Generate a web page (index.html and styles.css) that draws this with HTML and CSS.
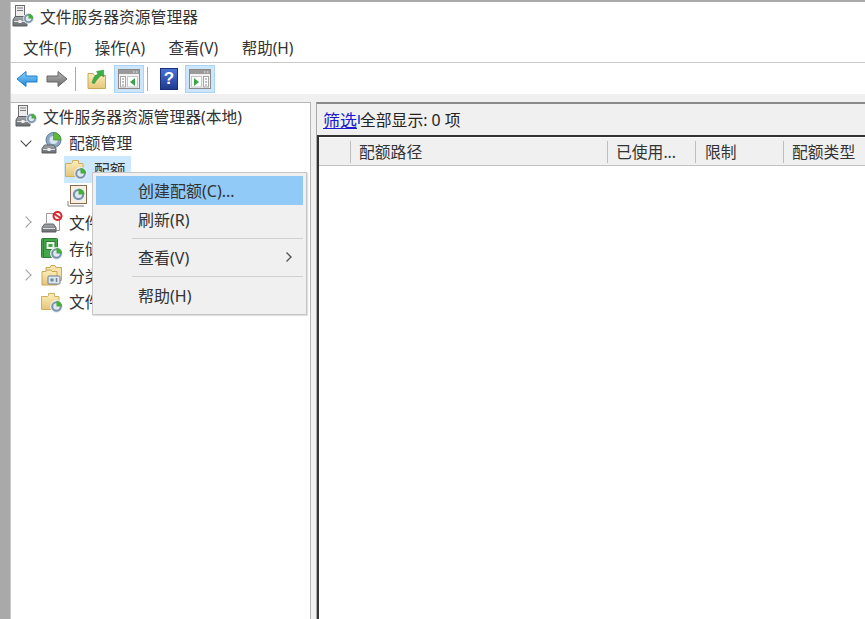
FILE: index.html
```html
<!DOCTYPE html>
<html lang="zh-CN">
<head>
<meta charset="utf-8">
<title>文件服务器资源管理器</title>
<link rel="stylesheet" href="styles.css">
</head>
<body>
<svg class="defs" width="0" height="0" aria-hidden="true">
  <defs>
    <linearGradient id="fold" x1="0" y1="0" x2="0" y2="1"><stop offset="0" stop-color="#fdeebb"/><stop offset="1" stop-color="#e5c678"/></linearGradient>
    <linearGradient id="blue" x1="0" y1="0" x2="0" y2="1"><stop offset="0" stop-color="#8fd2fb"/><stop offset="1" stop-color="#1f86d8"/></linearGradient>
    <linearGradient id="gray" x1="0" y1="0" x2="0" y2="1"><stop offset="0" stop-color="#b5b5b5"/><stop offset="1" stop-color="#6e6e6e"/></linearGradient>
    <linearGradient id="bag" x1="0" y1="0" x2="0" y2="1"><stop offset="0" stop-color="#a5a9ad"/><stop offset="1" stop-color="#666b70"/></linearGradient>
    <symbol id="pie" viewBox="0 0 12 12">
      <circle cx="6" cy="6" r="5.400" fill="#7b93ad" stroke="#eef3f7" stroke-width="1"/>
      <circle cx="6" cy="6" r="3" fill="#dfe8ef"/>
      <path d="M6 6V.8A5.200 5.200 0 0 1 11.200 6z" fill="#46ad3c"/>
    </symbol>
    <symbol id="server" viewBox="0 0 22 22">
      <rect x="3.500" y="0.500" width="9" height="11" fill="#eeeeee" stroke="#6d6d6d"/>
      <path d="M5 3h6M5 5.500h6" stroke="#777"/>
      <path d="M1 15l2-3.500h10l2 3.500v6h-14z" fill="url(#bag)" stroke="#5d6165"/>
      <path d="M2 16.500h12" stroke="#dcdcdc"/>
      <rect x="6.500" y="15" width="3" height="3" fill="#eee"/>
      <svg x="11" y="8" width="11" height="11"><use href="#pie"/></svg>
    </symbol>
    <symbol id="quota" viewBox="0 0 22 22">
      <circle cx="12.500" cy="8" r="7.500" fill="#8ca8c6" stroke="#5f7d99"/>
      <circle cx="12.500" cy="8" r="4" fill="#dbe5ee"/>
      <path d="M12.500 8V.5A7.500 7.500 0 0 1 20 8z" fill="#5dba3b" stroke="#3f8c2a" stroke-width=".6"/>
      <path d="M1 16.500l2.500-3.500h9l2.500 3.500v4.500h-14z" fill="url(#bag)" stroke="#5d6165"/>
      <path d="M2 17.500h12" stroke="#dcdcdc"/>
      <rect x="6.500" y="16" width="3" height="3" fill="#eee"/>
    </symbol>
    <symbol id="folderpie" viewBox="0 0 22 22">
      <path d="M.5 5.500h6l1-1V2.500h6v3h4.500v13h-17.500z" fill="url(#fold)" stroke="#cfae62"/>
      <svg x="9" y="9" width="13" height="13"><use href="#pie"/></svg>
    </symbol>
    <symbol id="template" viewBox="0 0 22 22">
      <rect x="4.500" y="0.500" width="16" height="18" fill="#f6efe2" stroke="#8c6a50"/>
      <path d="M2 21h16M2 16v5" stroke="#aaa" stroke-width="1.500"/>
      <svg x="5.500" y="2.500" width="14" height="14"><use href="#pie"/></svg>
    </symbol>
    <symbol id="blocked" viewBox="0 0 22 22">
      <path d="M5.500 12V2.500h8M18.500 9v10.500h-4" fill="#fff" stroke="#9a9a9a"/>
      <path d="M1 16.500l2.500-3.500h9l2.500 3.500v4.500h-14z" fill="url(#bag)" stroke="#5d6165"/>
      <path d="M2 17.500h12" stroke="#dcdcdc"/>
      <circle cx="16.500" cy="5" r="4" fill="#fff" stroke="#d8242c" stroke-width="2"/>
      <path d="M13.500 3l6 4" stroke="#d8242c" stroke-width="2"/>
    </symbol>
    <symbol id="storage" viewBox="0 0 22 22">
      <rect x=".5" y=".5" width="16" height="19" rx="1" fill="#45a64b" stroke="#2f7a34"/>
      <path d="M2.500 1v18" stroke="#2f7a34"/>
      <rect x="5" y="3.500" width="9" height="8" fill="#eaf6e7" stroke="#2f7a34"/>
      <rect x="7.500" y="6" width="4" height="3" fill="#45a64b"/>
      <svg x="9" y="9" width="13" height="13"><use href="#pie"/></svg>
    </symbol>
    <symbol id="classify" viewBox="0 0 22 22">
      <path d="M5 3.500h4l1-2h4l1 2h5.500v13h-15.500z" fill="#f6e2ac" stroke="#c9a658"/>
      <path d="M1 7.500h4l1-1.500h4l1 1.500h5v13.500h-15z" fill="url(#fold)" stroke="#c9a658"/>
      <rect x="7" y="12" width="12" height="8" rx="1" fill="#dfe7ef" stroke="#6d7f92"/>
      <circle cx="11" cy="16" r="1.800" fill="#6d8ba3"/>
      <path d="M15.500 14v4" stroke="#6d7f92" stroke-width="1.500"/>
    </symbol>
    <symbol id="back" viewBox="0 0 22 18">
      <path d="M1 9l9-7.500v4.500h11v6h-11v4.500z" fill="url(#blue)" stroke="#1c7fcf"/>
    </symbol>
    <symbol id="forward" viewBox="0 0 22 18">
      <path d="M21 9l-9-7.500v4.500h-11v6h11v4.500z" fill="url(#gray)" stroke="#666"/>
    </symbol>
    <symbol id="upfolder" viewBox="0 0 20 22">
      <path d="M1 5.500h5l1.500 2h11v13h-17.500z" fill="url(#fold)" stroke="#c9a658"/>
      <path d="M5 15c1-5 3-8 6-9l-1.500-2.500 7-1.500 .5 7-2.500-1.500c-2 1-5 4-7 8z" fill="#3fae49" stroke="#2f8a38" stroke-width=".5"/>
    </symbol>
    <symbol id="paneleft" viewBox="0 0 22 20">
      <rect x=".5" y=".5" width="21" height="19" fill="#f2f2f2" stroke="#8a8a8a"/>
      <rect x="1" y="1" width="20" height="4" fill="#9a9a9a"/>
      <path d="M15 3h1.500M18 3h1.500" stroke="#eee"/>
      <rect x="2.500" y="7.500" width="5" height="10.500" fill="#fff" stroke="#a5a5a5"/>
      <path d="M4 10h2M4 13h2M4 16h2" stroke="#888"/>
      <rect x="9.500" y="7.500" width="10" height="10.500" fill="#fff" stroke="#c5c5c5"/>
      <path d="M12 13l5-4v8z" fill="#37a447"/>
    </symbol>
    <symbol id="paneright" viewBox="0 0 22 20">
      <rect x=".5" y=".5" width="21" height="19" fill="#f2f2f2" stroke="#8a8a8a"/>
      <rect x="1" y="1" width="20" height="4" fill="#9a9a9a"/>
      <path d="M15 3h1.500M18 3h1.500" stroke="#eee"/>
      <rect x="2.500" y="7.500" width="10" height="10.500" fill="#fff" stroke="#c5c5c5"/>
      <path d="M10 13l-5-4v8z" fill="#37a447"/>
      <rect x="14.500" y="7.500" width="5" height="10.500" fill="#fff" stroke="#a5a5a5"/>
      <path d="M16 10h2M16 13h2M16 16h2" stroke="#888"/>
    </symbol>
  </defs>
</svg>

<div class="window">
  <header class="titlebar">
    <svg class="ico-title"><use href="#server"/></svg>
    <span>文件服务器资源管理器</span>
  </header>
  <nav class="menubar">
    <span class="menu-item">文件(F)</span>
    <span class="menu-item">操作(A)</span>
    <span class="menu-item">查看(V)</span>
    <span class="menu-item">帮助(H)</span>
  </nav>
  <div class="toolbar">
    <svg class="tb-arrow"><use href="#back"/></svg>
    <svg class="tb-arrow"><use href="#forward"/></svg>
    <i class="tb-sep first"></i>
    <svg class="tb-up"><use href="#upfolder"/></svg>
    <span class="tb-btn on"><svg class="tb-pane"><use href="#paneleft"/></svg></span>
    <i class="tb-sep"></i>
    <span class="tb-help">?</span>
    <span class="tb-btn on"><svg class="tb-pane"><use href="#paneright"/></svg></span>
  </div>
  <div class="gapbar"></div>
  <main class="panes">
    <aside class="tree">
      <div class="row lvl0"><svg class="ico"><use href="#server"/></svg><span>文件服务器资源管理器(本地)</span></div>
      <div class="row lvl1"><span class="tw open"></span><svg class="ico"><use href="#quota"/></svg><span>配额管理</span></div>
      <div class="row lvl2 selected"><svg class="ico"><use href="#folderpie"/></svg><span>配额</span></div>
      <div class="row lvl2"><svg class="ico"><use href="#template"/></svg></div>
      <div class="row lvl1"><span class="tw"></span><svg class="ico"><use href="#blocked"/></svg><span>文件</span></div>
      <div class="row lvl1"><span class="tw none"></span><svg class="ico"><use href="#storage"/></svg><span>存储</span></div>
      <div class="row lvl1"><span class="tw"></span><svg class="ico"><use href="#classify"/></svg><span>分类</span></div>
      <div class="row lvl1"><span class="tw none"></span><svg class="ico"><use href="#folderpie"/></svg><span>文件</span></div>
    </aside>
    <section class="detail">
      <div class="filter"><a class="filter-link">筛选</a><span class="filter-text">全部显示: 0 项</span></div>
      <div class="list">
        <div class="list-head">
          <span class="col col-icon"></span>
          <span class="col col-path">配额路径</span>
          <span class="col col-used">已使用...</span>
          <span class="col col-limit">限制</span>
          <span class="col col-type">配额类型</span>
        </div>
      </div>
    </section>
  </main>
</div>

<div class="ctx">
  <div class="ctx-item active">创建配额(C)...</div>
  <div class="ctx-item">刷新(R)</div>
  <div class="ctx-sep"></div>
  <div class="ctx-item">查看(V)<svg class="ctx-arrow" viewBox="0 0 8 12"><path d="M1.500 1.500L6 6l-4.500 4.500" fill="none" stroke="#555" stroke-width="1.400"/></svg></div>
  <div class="ctx-sep"></div>
  <div class="ctx-item">帮助(H)</div>
</div>
</body>
</html>
```
FILE: styles.css
```css
* { box-sizing: border-box; }
html, body { height: 100%; }
body {
  margin: 0;
  overflow: hidden;
  background: #a9a9a9;
  padding: 2px 0 0 10px;
  font-family: "Noto Sans", "Noto Sans CJK SC", sans-serif;
  font-size: 15.500px;
  color: #333;
}
.defs { position: absolute; }
.window {
  height: 617px;
  width: 855px;
  display: flex;
  flex-direction: column;
  background: #f0f0f0;
  border-left: 1px solid #c8c8c8;
}
.titlebar {
  height: 28px;
  background: #fff;
  display: flex;
  align-items: center;
  gap: 6px;
  padding-left: 1px;
  font-size: 15.800px;
}
.ico-title { width: 22px; height: 22px; }
.menubar {
  height: 33px;
  background: #fff;
  display: flex;
  align-items: center;
  gap: 23.500px;
  padding: 2px 0 0 12px;
  font-size: 15.500px;
  border-bottom: 1px solid #c8c8c8;
}
.toolbar {
  height: 31px;
  background: #fff;
  display: flex;
  align-items: center;
  padding-left: 5px;
}
.tb-arrow { width: 22px; height: 18px; margin-right: 8px; }
.tb-sep { width: 1px; height: 24px; background: #aaa; margin: 0 12px 0 3px; }
.tb-sep.first { margin: 0 11px 0 -1px; }
.tb-up { width: 20px; height: 22px; margin-right: 7px; }
.tb-btn {
  width: 30px;
  height: 28px;
  display: flex;
  align-items: center;
  justify-content: center;
}
.tb-btn.on { background: #cde6fb; border: 1px solid #a9d4f5; }
.tb-pane { width: 22px; height: 20px; }
.tb-help {
  width: 18px;
  height: 22px;
  margin-right: 7px;
  background: linear-gradient(#4a73d6, #1f3b8f);
  border: 1px solid #1a2f78;
  color: #fff;
  font: bold 17px/20px "Liberation Sans", sans-serif;
  text-align: center;
}
.gapbar { height: 8px; background: #f0f0f0; }
.panes { flex: 1; display: flex; min-height: 0; }
.tree {
  width: 300px;
  background: #fff;
  border-top: 1px solid #b5b5b5;
  border-right: 1px solid #b8b8b8;
  padding: 0 0 0 4px;
  font-size: 15.800px;
}
.row { height: 26.500px; display: flex; align-items: center; white-space: nowrap; }
.ico { width: 22px; height: 22px; flex: none; margin-right: 6px; }
.lvl1 { padding-left: 2px; }
.lvl2 { padding-left: 51px; }
.lvl2 .ico { margin-right: 7px; }
.selected { margin-left: 49px; padding-left: 1px; width: 67px; background: #cce8ff; }
.tw { width: 24px; flex: none; display: flex; justify-content: center; }
.tw::before {
  content: "";
  width: 7px;
  height: 7px;
  border-right: 1.500px solid #a0a0a0;
  border-top: 1.500px solid #a0a0a0;
  transform: translateX(-3px) rotate(45deg);
}
.tw.open::before {
  border-color: #444;
  transform: translate(-3px, -2px) rotate(135deg);
}
.tw.none::before { display: none; }
.detail {
  flex: 1;
  margin-left: 5px;
  display: flex;
  flex-direction: column;
  border-top: 2px solid #8a8a8a;
  border-left: 1px solid #aaa;
}
.filter {
  height: 31px;
  background: #f0f0f0;
  display: flex;
  align-items: center;
  padding: 0 0 1px 6px;
  font-size: 15.800px;
}
.filter-link {
  display: flex;
  align-items: center;
  gap: 1px;
  width: 37px;
  white-space: nowrap;
  font-size: 17px;
  color: #1a1ad0;
  text-decoration: underline;
}
.filter-link::after {
  content: "";
  width: 2px;
  height: 9px;
  background: #1a1ad0;
  opacity: .7;
}
.filter-text { color: #222; }
.list {
  flex: 1;
  background: #fff;
  border-top: 2px solid #333;
  border-left: 2px solid #333;
}
.list-head {
  height: 29px;
  display: flex;
  background: #f0f0f0;
  border-bottom: 1px solid #c0c0c0;
  border-top: 1px solid #fff;
  padding-top: 3px;
  font-size: 15.800px;
}
.col {
  height: 22px;
  line-height: 22px;
  padding-left: 8px;
  border-right: 1px solid #bdbdbd;
  flex: none;
  white-space: nowrap;
}
.col-icon { width: 32px; }
.col-path { width: 257px; }
.col-used { width: 88px; }
.col-limit { width: 88px; padding-left: 9px; }
.col-type { border-right: 0; }
.ctx {
  position: absolute;
  left: 92px;
  top: 172px;
  width: 215px;
  height: 143px;
  background: #f0f0f0;
  border: 1px solid #c6c6c6;
  padding: 3px 3px 0;
  box-shadow: 1px 1px 1px rgba(0,0,0,.12);
  font-size: 16px;
}
.ctx-item {
  height: 29px;
  padding: 0 10px 2px 42px;
  display: flex;
  align-items: center;
  justify-content: space-between;
}
.ctx-item.active { background: #91c9f7; }
.ctx-sep { height: 1px; background: #d0d0d0; margin: 4px 0 4px 36px; }
.ctx-arrow { width: 8px; height: 12px; }
```
